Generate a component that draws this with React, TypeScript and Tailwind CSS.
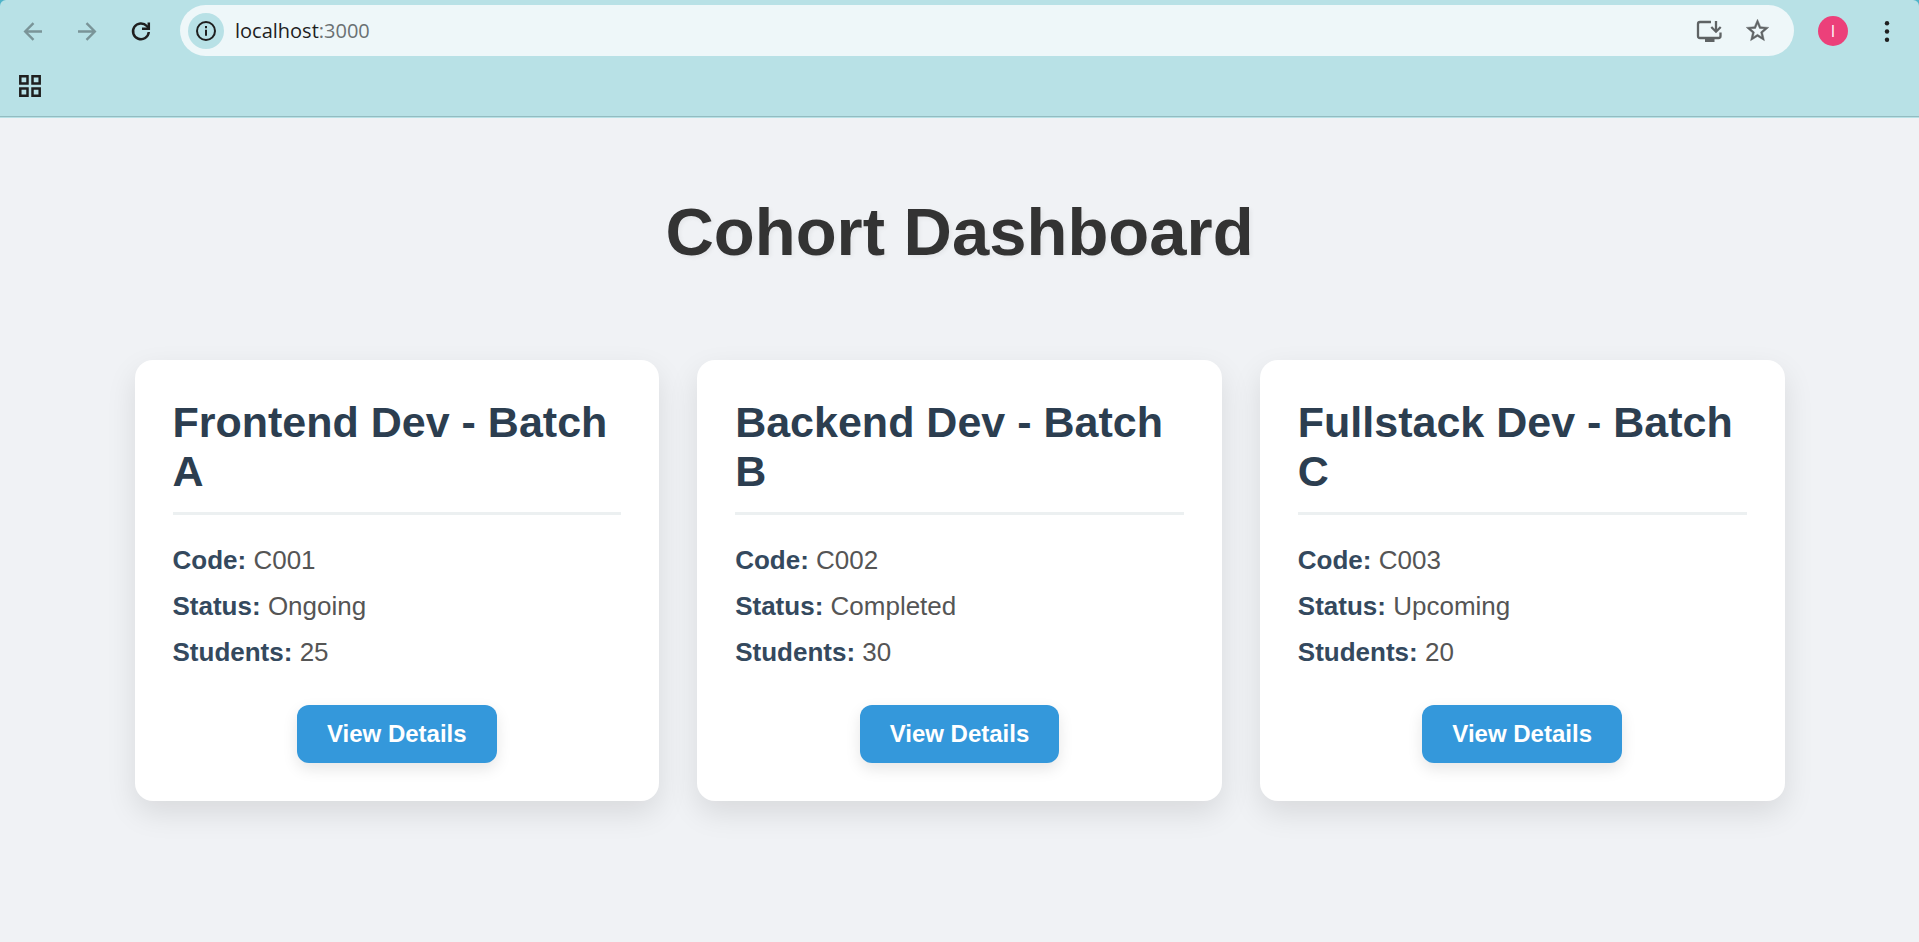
import type { ReactNode } from "react";

type Cohort = { title: string; code: string; status: string; students: number };

const cohorts: Cohort[] = [
  { title: "Frontend Dev - Batch A", code: "C001", status: "Ongoing", students: 25 },
  { title: "Backend Dev - Batch B", code: "C002", status: "Completed", students: 30 },
  { title: "Fullstack Dev - Batch C", code: "C003", status: "Upcoming", students: 20 },
];

function IconButton({ label, className = "", children }: { label: string; className?: string; children: ReactNode }) {
  return (
    <button type="button" aria-label={label} className={`flex shrink-0 items-center justify-center ${className}`}>
      {children}
    </button>
  );
}

function BrowserBar() {
  return (
    <div className="bg-[#4fb3c8]">
      <header className="rounded-t-md bg-[#b8e1e6] pb-px font-['Open_Sans',sans-serif] text-[#1f1f1f]">
        <nav aria-label="Browser" className="flex items-center pt-[5px]">
          <IconButton label="Back" className="ml-[18px] size-[30px] text-[#7a9498]">
            <svg viewBox="0 0 30 30" className="size-[30px]" fill="none" stroke="currentColor" strokeWidth="2.4">
              <path d="M24 15.500H7.500M15.500 7.200 7.200 15.500l8.300 8.300" />
            </svg>
          </IconButton>
          <IconButton label="Forward" className="ml-6 size-[30px] text-[#7a9498]">
            <svg viewBox="0 0 30 30" className="size-[30px]" fill="none" stroke="currentColor" strokeWidth="2.4">
              <path d="M6 15.500h16.500M14.500 7.200l8.300 8.300-8.300 8.300" />
            </svg>
          </IconButton>
          <IconButton label="Reload" className="ml-6 size-[30px]">
            <svg viewBox="0 0 30 30" className="size-[30px]" fill="none" stroke="currentColor" strokeWidth="2.500">
              <path d="M22.800 16A7.900 7.900 0 1 1 20.800 10L23 12.300" />
              <path d="M22.800 6.500v6.300H16" />
            </svg>
          </IconButton>
          <div className="ml-6 flex h-[51px] grow items-center rounded-full bg-[#eef7f9] pr-[22px] pl-2">
            <IconButton label="Site information" className="size-9 rounded-full bg-[#b8e1e6]">
              <svg viewBox="0 0 24 24" className="size-6" fill="none" stroke="currentColor" strokeWidth="2">
                <circle cx="12" cy="12" r="9" />
                <path d="M12 10.800v6M12 7v2.200" />
              </svg>
            </IconButton>
            <div className="ml-[11px] grow text-xl">
              localhost<span className="text-[#6a7173]">:3000</span>
            </div>
            <IconButton label="Install app" className="size-[30px] text-[#5f6364]">
              <svg viewBox="0 0 30 30" className="size-[30px]" fill="none" stroke="currentColor" strokeWidth="2.300">
                <path d="M17 6H6Q4 6 4 8v12q0 2 2 2h18.500q2 0 2-2v-3.500" />
                <path d="M22 5v10.500M17.300 11 22 15.700 26.700 11" />
                <path d="M11 22h9.500v4H11z" fill="currentColor" stroke="none" />
              </svg>
            </IconButton>
            <IconButton label="Bookmark this page" className="ml-[18px] size-[30px] text-[#5f6364]">
              <svg viewBox="0 0 24 24" className="size-[27px]" fill="currentColor" stroke="currentColor" strokeWidth="0.400">
                <path d="M22 9.240l-7.190-.620L12 2 9.190 8.630 2 9.240l5.460 4.730L5.820 21 12 17.270 18.180 21l-1.630-7.030L22 9.240zM12 15.400l-3.760 2.270 1-4.280-3.320-2.880 4.380-.380L12 6.100l1.710 4.040 4.380.380-3.320 2.880 1 4.280L12 15.400z" />
              </svg>
            </IconButton>
          </div>
          <button type="button" aria-label="Profile I" className="ml-6 flex size-[30px] items-center justify-center rounded-full bg-[#ec407a] text-base text-white">
            I
          </button>
          <IconButton label="Menu" className="mr-[17px] ml-6 size-[30px]">
            <svg viewBox="0 0 30 30" className="size-[30px]" fill="currentColor">
              <circle cx="15" cy="7.300" r="2.200" />
              <circle cx="15" cy="15.500" r="2.200" />
              <circle cx="15" cy="23.700" r="2.200" />
            </svg>
          </IconButton>
        </nav>
        <div className="flex h-[61px] items-center border-b border-[#93bcc1] pl-[15px]">
          <IconButton label="Apps" className="size-[30px]">
            <svg viewBox="0 0 30 30" className="size-[30px]" fill="none" stroke="currentColor" strokeWidth="2.500">
              <path d="M5.300 5.300h7.200v7.200H5.300zM17.500 5.300h7.200v7.200h-7.200zM5.300 17.500h7.200v7.200H5.300zM17.500 17.500h7.200v7.200h-7.200z" />
            </svg>
          </IconButton>
        </div>
      </header>
    </div>
  );
}

function Detail({ label, value }: { label: string; value: string | number }) {
  return (
    <p className="text-[26px] leading-[30px] text-[#555555]">
      <strong className="font-bold text-[#34495e]">{label}:</strong> {value}
    </p>
  );
}

function CohortCard({ title, code, status, students }: Cohort) {
  return (
    <article className="flex flex-col rounded-[18px] bg-white p-[38px] shadow-[0_12px_30px_rgba(0,0,0,0.1)]">
      <h2 className="mb-[30px] border-b-[3px] border-[#ecf0f1] pb-4 text-[43px] leading-[49px] font-bold text-[#2c3e50]">
        {title}
      </h2>
      <div className="flex flex-col gap-4">
        <Detail label="Code" value={code} />
        <Detail label="Status" value={status} />
        <Detail label="Students" value={students} />
      </div>
      <button
        type="button"
        className="mt-[38px] self-center rounded-xl bg-[#3498db] px-[30px] py-[15px] text-2xl leading-7 font-bold text-white shadow-[0_6px_15px_rgba(0,0,0,0.1)]"
      >
        View Details
      </button>
    </article>
  );
}

export default function App() {
  return (
    <div className="min-h-screen bg-[#f0f2f5] font-['Liberation_Sans',Arial,sans-serif]">
      <BrowserBar />
      <main className="mx-auto max-w-[1650px] py-[75px]">
        <h1 className="text-center text-[67px] leading-[77px] font-bold text-[#333333] [text-shadow:2px_2px_4px_rgba(0,0,0,0.05)]">
          Cohort Dashboard
        </h1>
        <section aria-label="Cohorts" className="mt-[90px] grid grid-cols-3 gap-[38px]">
          {cohorts.map((cohort) => (
            <CohortCard key={cohort.code} {...cohort} />
          ))}
        </section>
      </main>
    </div>
  );
}
